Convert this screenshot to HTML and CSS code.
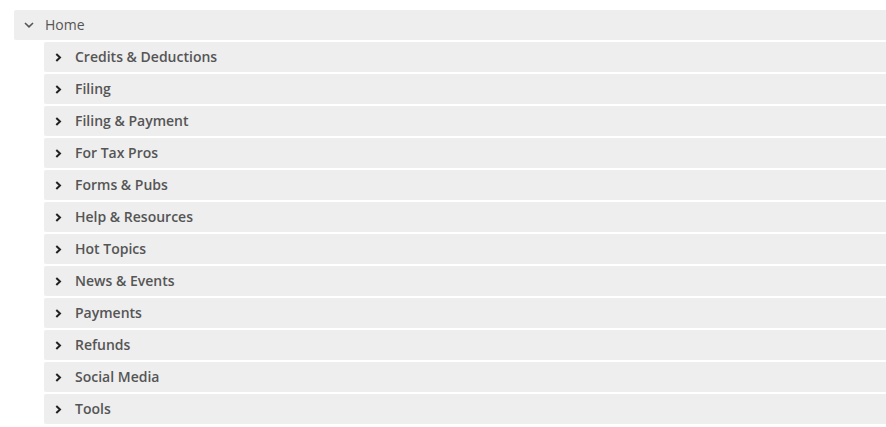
FILE: index.html
```html
<!DOCTYPE html>
<html>
<head>
<meta charset="utf-8">
<link rel="stylesheet" href="styles.css">
</head>
<body>
<div class="tree">
  <div class="row root">
    <svg class="chev-down" width="10" height="6" viewBox="0 0 10 6"><path d="M1 1 L5 4.8 L9 1" fill="none" stroke="#555" stroke-width="1.6"/></svg>
    <span class="label">Home</span>
  </div>
  <ul class="children">
    <li class="row child"><svg class="chev-right" width="7" height="9" viewBox="0 0 7 9"><path d="M1.3 1 L5 4.5 L1.3 8" fill="none" stroke="#222" stroke-width="2"/></svg><span class="label">Credits &amp; Deductions</span></li>
    <li class="row child"><svg class="chev-right" width="7" height="9" viewBox="0 0 7 9"><path d="M1.3 1 L5 4.5 L1.3 8" fill="none" stroke="#222" stroke-width="2"/></svg><span class="label">Filing</span></li>
    <li class="row child"><svg class="chev-right" width="7" height="9" viewBox="0 0 7 9"><path d="M1.3 1 L5 4.5 L1.3 8" fill="none" stroke="#222" stroke-width="2"/></svg><span class="label">Filing &amp; Payment</span></li>
    <li class="row child"><svg class="chev-right" width="7" height="9" viewBox="0 0 7 9"><path d="M1.3 1 L5 4.5 L1.3 8" fill="none" stroke="#222" stroke-width="2"/></svg><span class="label">For Tax Pros</span></li>
    <li class="row child"><svg class="chev-right" width="7" height="9" viewBox="0 0 7 9"><path d="M1.3 1 L5 4.5 L1.3 8" fill="none" stroke="#222" stroke-width="2"/></svg><span class="label">Forms &amp; Pubs</span></li>
    <li class="row child"><svg class="chev-right" width="7" height="9" viewBox="0 0 7 9"><path d="M1.3 1 L5 4.5 L1.3 8" fill="none" stroke="#222" stroke-width="2"/></svg><span class="label">Help &amp; Resources</span></li>
    <li class="row child"><svg class="chev-right" width="7" height="9" viewBox="0 0 7 9"><path d="M1.3 1 L5 4.5 L1.3 8" fill="none" stroke="#222" stroke-width="2"/></svg><span class="label">Hot Topics</span></li>
    <li class="row child"><svg class="chev-right" width="7" height="9" viewBox="0 0 7 9"><path d="M1.3 1 L5 4.5 L1.3 8" fill="none" stroke="#222" stroke-width="2"/></svg><span class="label">News &amp; Events</span></li>
    <li class="row child"><svg class="chev-right" width="7" height="9" viewBox="0 0 7 9"><path d="M1.3 1 L5 4.5 L1.3 8" fill="none" stroke="#222" stroke-width="2"/></svg><span class="label">Payments</span></li>
    <li class="row child"><svg class="chev-right" width="7" height="9" viewBox="0 0 7 9"><path d="M1.3 1 L5 4.5 L1.3 8" fill="none" stroke="#222" stroke-width="2"/></svg><span class="label">Refunds</span></li>
    <li class="row child"><svg class="chev-right" width="7" height="9" viewBox="0 0 7 9"><path d="M1.3 1 L5 4.5 L1.3 8" fill="none" stroke="#222" stroke-width="2"/></svg><span class="label">Social Media</span></li>
    <li class="row child"><svg class="chev-right" width="7" height="9" viewBox="0 0 7 9"><path d="M1.3 1 L5 4.5 L1.3 8" fill="none" stroke="#222" stroke-width="2"/></svg><span class="label">Tools</span></li>
  </ul>
</div>
</body>
</html>
```

FILE: styles.css
```css
html, body {
  margin: 0;
  padding: 0;
  background: #fff;
  overflow: hidden;
}
body {
  font-family: "Open Sans", "Liberation Sans", sans-serif;
  color: #555;
}
.tree {
  padding: 10px 0 0 14px;
}
.row {
  display: flex;
  align-items: center;
  height: 30px;
  padding-bottom: 2px;
  background: #eee;
  border-radius: 2px 0 0 2px;
  box-sizing: border-box;
}
.root {
  padding-left: 10px;
  font-size: 14px;
  font-weight: 400;
}
.root .label {
  margin-left: 11px;
}
.chev-down {
  flex: none;
  margin-top: 2px;
}
.children {
  list-style: none;
  margin: 2px 0 0 30px;
  padding: 0;
  display: flex;
  flex-direction: column;
  gap: 2px;
}
.child {
  padding-left: 11px;
  font-size: 14px;
  font-weight: 600;
}
.chev-right {
  flex: none;
  margin-top: 2px;
}
.child .label {
  margin-left: 13px;
}
```
